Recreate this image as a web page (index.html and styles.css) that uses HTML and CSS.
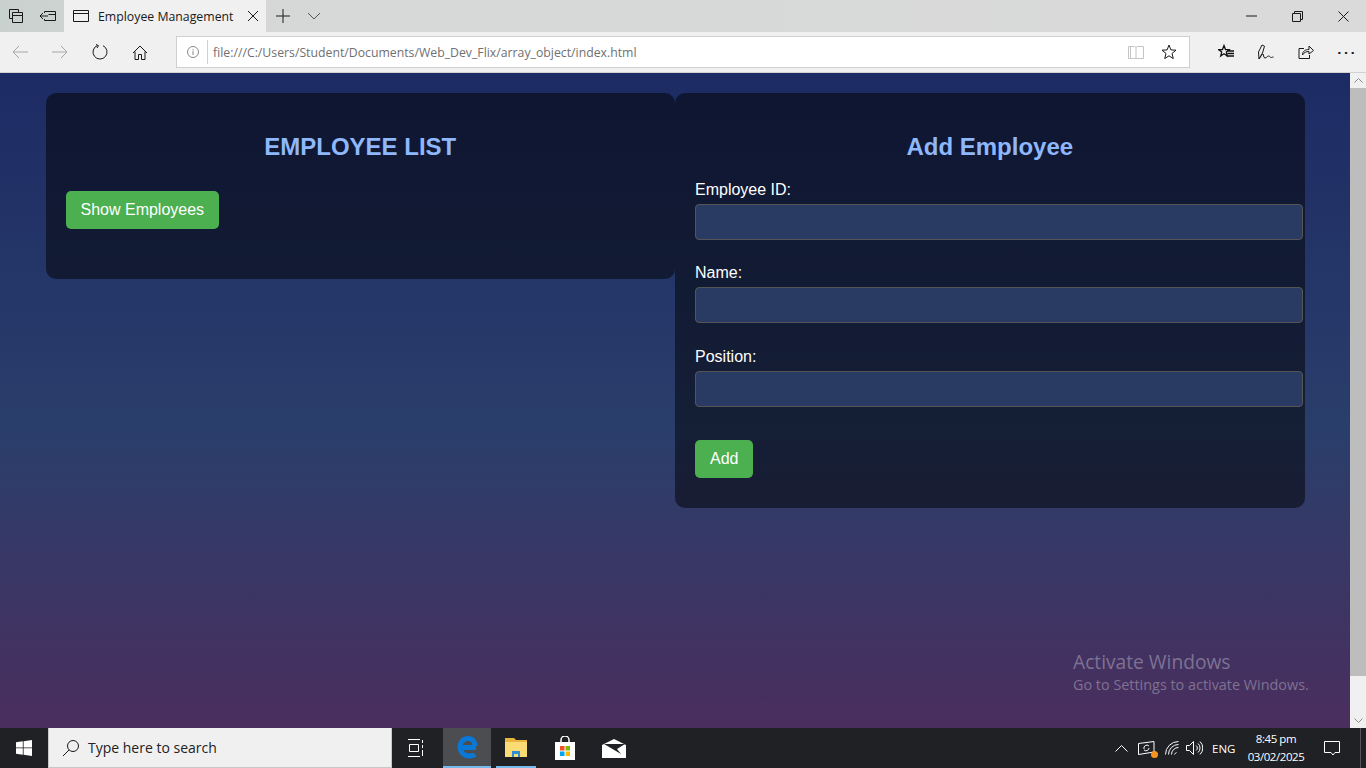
FILE: index.html
```html
<!DOCTYPE html>
<html>
<head>
  <meta charset="utf-8">
  <title>Employee Management</title>
  <link rel="stylesheet" href="styles.css">
</head>

<body>
<div class="screen">

  <!-- browser tabs -->
  <div class="tabbar">
    <div class="slot-32">
      <svg width="16" height="16" viewBox="0 0 16 16" class="ico"><path d="M1.500 1.500h9v3M1.500 1.500v9h3M4.500 4.500h10v10h-10zM4.500 7.500h10"/></svg>
    </div>
    <div class="slot-32">
      <svg width="18" height="16" viewBox="0 0 18 16" class="ico"><path d="M1 8h8M4 5 1 8l3 3M5.500 5V3.500h11v9h-11V11M9.500 6.500h7"/></svg>
    </div>
    <div class="tab">
      <svg width="16" height="14" viewBox="0 0 16 14" class="ico"><path d="M.5 1.500h15v11H.5zM.5 4.500h15"/></svg>
      <span class="tab-title">Employee Management</span>
      <svg width="12" height="12" viewBox="0 0 12 12" class="ico tab-close"><path d="M1 1l10 10M11 1 1 11"/></svg>
    </div>
    <div class="slot-34">
      <svg width="14" height="14" viewBox="0 0 14 14" class="ico"><path d="M7 0v14M0 7h14"/></svg>
    </div>
    <div class="slot-28">
      <svg width="14" height="8" viewBox="0 0 14 8" class="ico-dim"><path d="M1 1l6 6 6-6"/></svg>
    </div>
    <div class="spacer"></div>
    <div class="slot-46">
      <svg width="11" height="2" viewBox="0 0 11 2" class="ico"><path d="M0 1h11"/></svg>
    </div>
    <div class="slot-46">
      <svg width="11" height="11" viewBox="0 0 11 11" class="ico"><path d="M.5 2.500h8v8h-8zM2.500 2.500v-2h8v8h-2"/></svg>
    </div>
    <div class="slot-46">
      <svg width="11" height="11" viewBox="0 0 11 11" class="ico"><path d="M.5.500l10 10M10.500.500l-10 10"/></svg>
    </div>
  </div>

  <!-- address bar -->
  <div class="toolbar">
    <div class="slot-40">
      <svg width="16" height="14" viewBox="0 0 16 14" class="ico-light"><path d="M16 7H1M7 1 1 7l6 6"/></svg>
    </div>
    <div class="slot-40">
      <svg width="16" height="14" viewBox="0 0 16 14" class="ico-light"><path d="M0 7h15M9 1l6 6-6 6"/></svg>
    </div>
    <div class="slot-40">
      <svg width="16" height="16" viewBox="0 0 16 16" class="ico"><path d="M5.500 1.500A7 7 0 1 0 11 1.700"/><path d="M4 .5l2.500 1.200L5 4"/></svg>
    </div>
    <div class="slot-40">
      <svg width="16" height="15" viewBox="0 0 16 15" class="ico"><path d="M1 8l7-7 7 7M3 6.500v8h3.500V9.500h3v5H13v-8"/></svg>
    </div>
    <div class="gap-16"></div>
    <div class="address">
      <svg width="12" height="12" viewBox="0 0 12 12" class="ico-grey info"><circle cx="6" cy="6" r="5.500"/><path d="M6 5v4M6 3v1.200"/></svg>
      <span class="address-sep"></span>
      <span class="address-text">file:///C:/Users/Student/Documents/Web_Dev_Flix/array_object/index.html</span>
      <span class="spacer"></span>
      <svg width="16" height="14" viewBox="0 0 16 14" class="ico-pale book"><path d="M.5 1.500h6l1.500 1 1.500-1h6v12h-15zM8 2.500v11M2.500 1.500v12"/></svg>
      <svg width="16" height="16" viewBox="0 0 16 16" class="ico star"><path d="M8 1l1.900 4.900 5.100.3-4 3.300 1.300 5.100L8 11.800l-4.300 2.800L5 9.500 1 6.200l5.100-.3z"/></svg>
    </div>
    <div class="gap-16"></div>
    <div class="slot-40">
      <svg width="16" height="16" viewBox="0 0 16 16" class="ico-bold"><path d="M6 1.500l1.500 4 3.700.2-2.900 2.400 1 3.900L6 9.800 2.700 12l1-3.900L.8 5.700l3.700-.2zM9 7h7M9.500 9.500H16M8.500 12H16"/></svg>
    </div>
    <div class="slot-40">
      <svg width="18" height="17" viewBox="0 0 18 17" class="ico"><path d="M2 15 1.500 8 5 1l2.500 1.200L5.500 9zM2 15c1.500-2 3-5 4-5 1 0 0 4 2 4s2-2 3.500-2 2 2 3 1.500 1.500-.5 2-.5"/></svg>
    </div>
    <div class="slot-40">
      <svg width="16" height="16" viewBox="0 0 16 16" class="ico"><path d="M6 4.500H1v10h10.500V11M4.500 11c0-4 3-5.500 6.500-5.500V2l4.500 4.500L11 10V7.500c-3 0-5 1-6.500 3.500z"/></svg>
    </div>
    <div class="slot-40 more">&#8943;</div>
  </div>

  <div class="viewport">
    <div class="page">
      <div class="container">
        <div class="card card-list">
          <h2>EMPLOYEE LIST</h2>
          <button class="btn">Show Employees</button>
        </div>
        <div class="card card-form">
          <h2 class="form-title">Add Employee</h2>
          <form>
            <label class="field-label">Employee ID:</label>
            <input class="field" type="text">
            <label class="field-label">Name:</label>
            <input class="field" type="text">
            <label class="field-label">Position:</label>
            <input class="field" type="text">
            <button class="btn btn-add" type="button">Add</button>
          </form>
        </div>
      </div>
      <div class="activate">
        <div class="activate-big">Activate Windows</div>
        <div class="activate-small">Go to Settings to activate Windows.</div>
      </div>
    </div>
    <div class="scrollbar">
      <div class="scroll-btn">
        <svg width="9" height="5" viewBox="0 0 9 5" class="ico-grey"><path d="M.5 4.500l4-4 4 4"/></svg>
      </div>
      <div class="scroll-thumb"></div>
      <div class="scroll-rest"></div>
      <div class="scroll-btn">
        <svg width="9" height="5" viewBox="0 0 9 5" class="ico-grey"><path d="M.5.500l4 4 4-4"/></svg>
      </div>
    </div>
  </div>

  <!-- windows taskbar -->
  <div class="taskbar">
    <div class="start">
      <svg width="16" height="16" viewBox="0 0 16 16" fill="#fff"><path d="M0 2.300 6.800 1.300V7.500H0zM7.600 1.200 16 0v7.500H7.600zM0 8.300h6.800v6.400L0 13.700zM7.600 8.300H16V16l-8.400-1.200z"/></svg>
    </div>
    <div class="search">
      <svg width="18" height="18" viewBox="0 0 18 18" class="ico"><circle cx="11" cy="7" r="5.500"/><path d="M7 11l-6 6"/></svg>
      <span>Type here to search</span>
    </div>
    <div class="task-btn task-view">
      <svg width="16" height="18" viewBox="0 0 16 18" class="ico-white"><path d="M0 .5h12M1.500 5.500h9v7h-9zM0 17.500h12M14.500 1v3M14.500 6v3M14.500 11v6"/></svg>
    </div>
    <div class="task-btn task-edge">
      <svg width="22" height="24" viewBox="0 0 22 24" fill="none" stroke="#0a78d7" stroke-width="5"><path d="M20 12.500H4M4 12.500C4 7 7.500 3.500 12 3.500c4.500 0 7 3 7 7.500M4 11c0 6 4 10 9 10 2.500 0 5-.7 6-1.700"/></svg>
    </div>
    <div class="task-gap"></div>
    <div class="task-btn task-files">
      <svg width="22" height="20" viewBox="0 0 22 20"><path d="M0 1h9l2 2h11v17H0z" fill="#e8b53c"/><path d="M0 5h22v15H0z" fill="#fbdc74"/><path d="M7 20v-6h8v6h-2v-3H9v3z" fill="#2f8fd6"/></svg>
    </div>
    <div class="task-btn task-store">
      <svg width="22" height="24" viewBox="0 0 22 24"><path d="M7 7V4a4 4 0 0 1 8 0v3" fill="none" stroke="#fff" stroke-width="1.500"/><path d="M1 6h20v18H1z" fill="#fff"/><path d="M6 10h4.500v4.500H6z" fill="#f25022"/><path d="M11.500 10H16v4.500h-4.500z" fill="#7fba00"/><path d="M6 15.500h4.500V20H6z" fill="#00a4ef"/><path d="M11.500 15.500H16V20h-4.500z" fill="#ffb900"/></svg>
    </div>
    <div class="task-btn task-mail">
      <svg width="24" height="19" viewBox="0 0 24 19"><path d="M0 6 12 0l12 6v13H0z" fill="#fff"/><path d="M2 5h21l-8 5 4 5z" fill="#1f2125"/></svg>
    </div>
    <div class="spacer"></div>
    <div class="tray">
      <svg width="13" height="8" viewBox="0 0 13 8" class="ico-white tray-up"><path d="M.5 7.500l6-6 6 6"/></svg>
      <div class="tray-meet">
        <svg width="17" height="15" viewBox="0 0 17 15" class="ico-white"><path d="M.5 2.500 16 .5v10.500l-15.500 2.500zM6 8a3 3 0 0 1 5-3M11 7a3 3 0 0 1-5 2"/></svg>
        <span class="tray-dot"></span>
      </div>
      <svg width="14" height="14" viewBox="0 0 14 14" class="ico-white tray-wifi"><path d="M.5 13.500a13 13 0 0 1 13-13M3.500 13.500a10 10 0 0 1 10-10M6.500 13.500a7 7 0 0 1 7-7M9.500 13.500a4 4 0 0 1 2-2"/></svg>
      <svg width="17" height="14" viewBox="0 0 17 14" class="ico-white tray-vol"><path d="M.5 4.500h3l4-4v13l-4-4h-3zM10 4.500a3 3 0 0 1 0 5M12 2.500a6 6 0 0 1 0 9M14 .5a9 9 0 0 1 0 13"/></svg>
      <span class="tray-lang">ENG</span>
      <div class="clock">
        <div>8:45 pm</div>
        <div>03/02/2025</div>
      </div>
      <svg width="16" height="16" viewBox="0 0 16 16" class="ico-white tray-note"><path d="M.5 1.500h15v11H11l-2 2.500-2-2.500H.5z"/></svg>
      <span class="show-desktop"></span>
    </div>
  </div>

</div>
</body>
</html>
```

FILE: styles.css
```css
* {box-sizing: border-box;}
html, body {margin: 0; height: 100%; overflow: hidden;}
body {font-family: "Liberation Sans", Arial, sans-serif;}

.screen {width: 1366px; height: 768px; display: flex; flex-direction: column;}
.spacer {flex: 1;}

svg {display: block; flex: none;}
.ico {fill: none; stroke: #1a1a1a; stroke-width: 1;}
.ico-bold {fill: none; stroke: #111; stroke-width: 1.300;}
.ico-dim {fill: none; stroke: #555; stroke-width: 1;}
.ico-grey {fill: none; stroke: #8a8a8a; stroke-width: 1;}
.ico-light {fill: none; stroke: #a8a8a8; stroke-width: 1;}
.ico-pale {fill: none; stroke: #c4c4c4; stroke-width: 1;}
.ico-white {fill: none; stroke: #fff; stroke-width: 1;}

.slot-28, .slot-32, .slot-34, .slot-40, .slot-46 {display: flex; align-items: center; justify-content: center; flex: none;}
.slot-28 {width: 28px;}
.slot-32 {width: 32px;}
.slot-34 {width: 34px;}
.slot-40 {width: 40px;}
.slot-46 {width: 46px;}
.gap-16 {width: 16px; flex: none;}

/* tab row */
.tabbar {height: 32px; flex: none; display: flex; background: linear-gradient(90deg, #c9d1cf 0, #d6d8d7 300px, #dadada 100%);}
.tab {width: 202px; display: flex; align-items: center; padding-left: 9px; background: #f0f0f0; font-family: "Open Sans", sans-serif; font-size: 12.300px; color: #1a1a1a;}
.tab-title {margin-left: 9px; white-space: nowrap; width: 140px;}
.tab-close {margin-left: 9px;}

/* address row */
.toolbar {height: 41px; flex: none; display: flex; background: #f0f0f0; border-bottom: 1px solid #d2d2d2;}
.address {width: 1014px; height: 32px; margin-top: 4px; display: flex; align-items: center; background: #fff; border: 1px solid #cfcfcf;}
.info {margin-left: 10px;}
.address-sep {width: 1px; height: 24px; margin-left: 8px; background: #d0d0d0;}
.address-text {margin-left: 5px; font-family: "Open Sans", sans-serif; font-size: 12.270px; color: #707070; white-space: nowrap;}
.book {margin-right: 17px;}
.star {margin-right: 12px;}
.more {font-size: 20px; color: #1a1a1a;}

/* page */
.viewport {flex: 1; display: flex; min-height: 0;}
.page {flex: 1; position: relative; padding-top: 20px; background: linear-gradient(180deg, #1d2b64 0, #2a3e6b 55%, #4a2e5e 100%);}
.container {width: 1259px; margin: 0 auto; display: flex; align-items: flex-start;}
.card {flex: 1; padding: 20px; border-radius: 10px; background: rgba(0, 0, 0, 0.5);}
.card-list {padding-bottom: 50px;}
.card-form {padding-bottom: 30px;}

h2 {margin: 20px 0; font-size: 24px; text-align: center; color: #8fb7fc;}
.form-title {margin-bottom: 20px;}

.btn {display: block; margin-top: 30px; padding: 10px 15px; border: 0; border-radius: 5px; background: #4caf50; color: #fff; font-family: "Liberation Sans", Arial, sans-serif; font-size: 16px;}
.btn-add {margin-top: 33.500px;}

.field-label {display: block; margin-bottom: 5px; font-size: 16px; color: #fff;}
.field {display: block; box-sizing: content-box; width: 100%; height: 18px; padding: 8px; margin-bottom: 24.400px; border: 1px solid #555; border-radius: 4px; background: #2a3b63; color: #fff;}
.field:last-of-type {margin-bottom: 0;}

.activate {position: absolute; left: 1073px; top: 577px; font-family: "Open Sans", sans-serif; color: rgba(255, 255, 255, 0.32); white-space: nowrap;}
.activate-big {font-size: 19.200px; line-height: 24px;}
.activate-small {font-size: 14.400px; line-height: 22px;}

/* scrollbar */
.scrollbar {width: 16px; flex: none; display: flex; flex-direction: column; background: #f0f0f0;}
.scroll-btn {height: 15px; display: flex; align-items: center; justify-content: center;}
.scroll-thumb {height: 588px; background: #bdbdbd;}
.scroll-rest {flex: 1;}

/* taskbar */
.taskbar {height: 40px; flex: none; display: flex; background: #1f2125; color: #fff;}
.start {width: 48px; display: flex; align-items: center; justify-content: center;}
.search {width: 344px; display: flex; align-items: center; padding-left: 13px; background: #f0f0f0; border: 1px solid #c8c8c8; border-width: 0 1px 1px 1px; color: #222; font-family: "Open Sans", sans-serif; font-size: 14px;}
.search span {margin-left: 8px;}
.task-btn {display: flex; align-items: center; justify-content: center; flex: none; height: 40px;}
.task-view {width: 51px; padding-right: 4px;}
.task-edge {width: 48px; background: #4b4d50; border-bottom: 2px solid #76b9ed;}
.task-gap {width: 5px; flex: none;}
.task-files {width: 40px; border-bottom: 2px solid #76b9ed;}
.task-store {width: 58px;}
.task-mail {width: 39px;}

.tray {display: flex; align-items: center; font-family: "Open Sans", sans-serif; font-size: 11.500px;}
.tray-up {margin-right: 10px;}
.tray-meet {position: relative; margin-right: 10px;}
.tray-dot {position: absolute; right: -3px; bottom: -2px; width: 7px; height: 7px; border-radius: 50%; background: #f7941d;}
.tray-wifi {margin-right: 7px;}
.tray-lang {margin-left: 9px; width: 25px;}
.clock {width: 64px; margin-left: 7px; text-align: center; line-height: 18px; letter-spacing: -0.450px;}
.tray-note {margin-left: 16px;}
.show-desktop {width: 1px; height: 40px; margin-left: 20px; margin-right: 5px; background: #55575a;}
```
